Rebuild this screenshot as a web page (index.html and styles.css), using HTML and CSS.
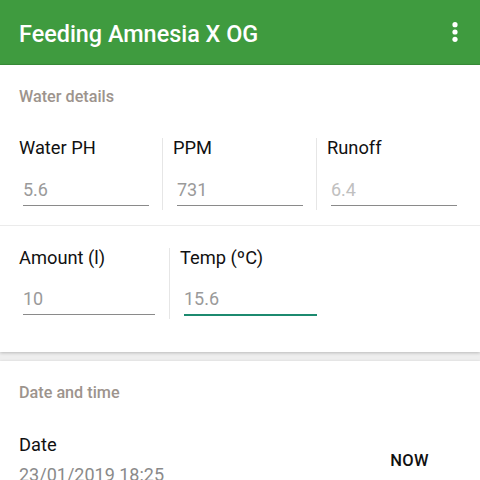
FILE: index.html
```html
<!DOCTYPE html>
<html>
<head>
<meta charset="utf-8">
<link rel="stylesheet" href="styles.css">
</head>
<body>
<header class="appbar">
  <h1 class="title">Feeding Amnesia X OG</h1>
  <svg class="kebab" width="10" height="24" viewBox="0 0 10 24" aria-hidden="true">
    <circle cx="5" cy="4.7" r="2.6" fill="#fff"/>
    <circle cx="5" cy="12" r="2.6" fill="#fff"/>
    <circle cx="5" cy="19.3" r="2.6" fill="#fff"/>
  </svg>
</header>
<main class="content">
  <section class="card card-water">
    <h2 class="section-title">Water details</h2>
    <div class="row row-three">
      <div class="field">
        <div class="label">Water PH</div>
        <div class="value">5.6</div>
      </div>
      <div class="field divided">
        <div class="label">PPM</div>
        <div class="value">731</div>
      </div>
      <div class="field divided">
        <div class="label">Runoff</div>
        <div class="value disabled">6.4</div>
      </div>
    </div>
    <div class="separator"></div>
    <div class="row row-two">
      <div class="field">
        <div class="label">Amount (l)</div>
        <div class="value wide">10</div>
      </div>
      <div class="field divided">
        <div class="label">Temp (ºC)</div>
        <div class="value wide focused">15.6</div>
      </div>
    </div>
  </section>
  <section class="card card-date">
    <h2 class="section-title">Date and time</h2>
    <div class="date-row">
      <div class="date-info">
        <div class="label">Date</div>
        <div class="date-value">23/01/2019 18:25</div>
      </div>
      <button class="now-btn">NOW</button>
    </div>
  </section>
</main>
</body>
</html>
```

FILE: styles.css
```css
* { box-sizing: border-box; }
html, body { margin: 0; padding: 0; }
body {
  width: 480px;
  height: 480px;
  overflow: hidden;
  background: #eeeeee;
  font-family: Roboto, "Liberation Sans", sans-serif;
  color: #111;
}
.appbar {
  height: 65px;
  background: #3f9b3f;
  display: flex;
  align-items: center;
  justify-content: space-between;
  padding: 3px 20px 0 19px;
  border-bottom: 1px solid #388f38;
}
.title {
  margin: 0;
  font-size: 23.4px;
  font-weight: 500;
  color: #fff;
  line-height: 28px;
}
.kebab { display: block; margin-top: -4px; }
.content { display: flex; flex-direction: column; gap: 9px; }
.card {
  background: #fff;
  box-shadow: 0 1px 3px rgba(0,0,0,0.22);
}
.card-water { padding: 22px 0 33px 8px; }
.section-title {
  margin: 0 0 0 11px;
  font-size: 16.2px;
  font-weight: 500;
  color: #9d948d;
  line-height: 20px;
}
.row { display: grid; }
.row-three { grid-template-columns: 154px 154px 154px; margin-top: 31px; }
.row-two { grid-template-columns: 161px 161px; }
.field {
  padding: 0 0 4px 11px;
}
.field.divided {
  border-left: 1px solid #e6e6e6;
  padding-left: 10px;
}
.label {
  font-size: 18.3px;
  line-height: 20px;
  color: #111;
}
.value {
  margin: 22px 0 0 4px;
  width: 126px;
  font-size: 18px;
  line-height: 20px;
  color: #9a9a9a;
  padding-bottom: 5px;
  border-bottom: 1px solid #8a8a8a;
}
.value.disabled { color: #c0c0c0; }
.value.wide { width: 132px; margin-top: 21px; padding-bottom: 5px; }
.value.focused {
  width: 133px;
  border-bottom: 2px solid #1c8a6f;
  margin-bottom: -1px;
}
.separator {
  height: 1px;
  background: #ebebeb;
  margin: 15px 0 22px -8px;
}
.card-date { padding: 22px 0 30px 8px; }
.date-row {
  display: flex;
  align-items: center;
  justify-content: space-between;
  margin-top: 32px;
  padding-left: 11px;
}
.date-value {
  margin-top: 10px;
  font-size: 18px;
  line-height: 20px;
  color: #8a8a8a;
}
.now-btn {
  border: 0;
  background: none;
  font-family: inherit;
  font-size: 16.5px;
  letter-spacing: 0.4px;
  font-weight: 500;
  color: #111;
  padding: 0;
  margin: 0 51px 0 0;
}
```
